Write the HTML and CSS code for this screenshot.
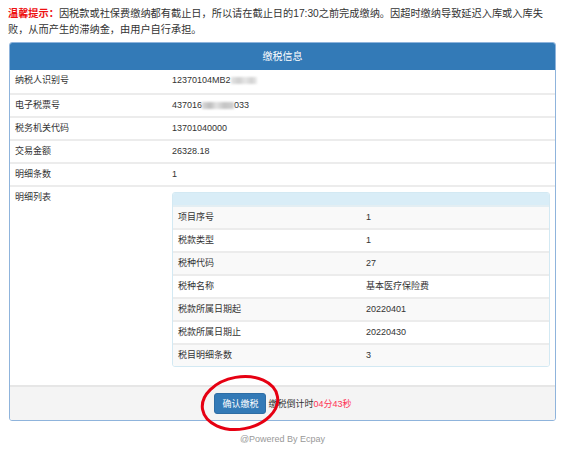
FILE: index.html
```html
<!DOCTYPE html>
<html lang="zh-CN">
<head>
<meta charset="utf-8">
<title>缴税信息</title>
<link rel="stylesheet" href="styles.css">
</head>
<body>
<div class="page">
  <p class="notice"><span class="notice-title">温馨提示：</span>因税款或社保费缴纳都有截止日，所以请在截止日的17:30之前完成缴纳。因超时缴纳导致延迟入库或入库失败，从而产生的滞纳金，由用户自行承担。</p>

  <div class="panel">
    <div class="panel-heading">缴税信息</div>
    <div class="panel-body">
      <div class="row"><div class="label">纳税人识别号</div><div class="value">12370104MB2<span class="blur"></span></div></div>
      <div class="row"><div class="label">电子税票号</div><div class="value">437016<span class="blur blur-long"></span>033</div></div>
      <div class="row"><div class="label">税务机关代码</div><div class="value">13701040000</div></div>
      <div class="row"><div class="label">交易金额</div><div class="value">26328.18</div></div>
      <div class="row"><div class="label">明细条数</div><div class="value">1</div></div>
      <div class="row row-detail">
        <div class="label">明细列表</div>
        <div class="value">
          <div class="subpanel">
            <div class="subpanel-heading"></div>
            <div class="subrow odd"><div class="sublabel">项目序号</div><div class="subvalue">1</div></div>
            <div class="subrow"><div class="sublabel">税款类型</div><div class="subvalue">1</div></div>
            <div class="subrow odd"><div class="sublabel">税种代码</div><div class="subvalue">27</div></div>
            <div class="subrow"><div class="sublabel">税种名称</div><div class="subvalue">基本医疗保险费</div></div>
            <div class="subrow odd"><div class="sublabel">税款所属日期起</div><div class="subvalue">20220401</div></div>
            <div class="subrow"><div class="sublabel">税款所属日期止</div><div class="subvalue">20220430</div></div>
            <div class="subrow odd"><div class="sublabel">税目明细条数</div><div class="subvalue">3</div></div>
          </div>
        </div>
      </div>
    </div>
    <div class="panel-footer">
      <div class="btn-wrap">
        <button class="btn" type="button">确认缴税</button>
        <svg class="circle" width="90" height="64" viewBox="0 0 90 64" aria-hidden="true">
          <ellipse cx="45" cy="32" rx="38" ry="26" transform="rotate(-10 45 32)" fill="none" stroke="#e60012" stroke-width="3"/>
        </svg>
      </div>
      <span class="countdown">缴税倒计时<span class="time">04分43秒</span></span>
    </div>
  </div>

  <div class="powered">@Powered By Ecpay</div>
</div>
</body>
</html>
```

FILE: styles.css
```css
* { box-sizing: border-box; }

html, body {
  margin: 0;
  padding: 0;
  background: #ffffff;
}

body {
  font-family: "Liberation Sans", Arial, "Noto Sans CJK SC", sans-serif;
  color: #333333;
}

.page {
  padding: 6px 11px 0 8px;
}

.notice {
  margin: 0 0 4px 0;
  padding-right: 10px;
  font-size: 10.2px;
  line-height: 16px;
  color: #333333;
}

.notice-title {
  color: #ee1111;
  font-weight: bold;
}

.panel {
  margin-left: 1px;
  border: 1px solid #8fb4dc;
  border-radius: 3px;
}

.panel-heading {
  background: #337ab7;
  color: #ffffff;
  font-size: 10px;
  height: 27px;
  line-height: 27px;
  text-align: center;
  border-radius: 2px 2px 0 0;
}

.panel-body {
  background: #ffffff;
  padding-bottom: 5px;
}

.row {
  display: flex;
  font-size: 9px;
  line-height: 21px;
  height: 23px;
}

.row + .row {
  border-top: 2px solid #ececec;
}

.label {
  width: 157px;
  padding-left: 5px;
  flex-shrink: 0;
}

.value {
  flex: 1;
  padding-left: 5px;
  padding-right: 5px;
}

.blur {
  display: inline-block;
  width: 26px;
  height: 7px;
  vertical-align: middle;
  background: linear-gradient(90deg, #e4e4e4 0%, #cfcfcf 30%, #e6e6e6 55%, #d2d2d2 80%, #ececec 100%);
  filter: blur(1.2px);
}

.blur-long {
  width: 32px;
  background: linear-gradient(90deg, #d8d8d8 0%, #bdbdbd 25%, #e2e2e2 45%, #c4c4c4 70%, #d0d0d0 100%);
}

.row-detail {
  height: auto;
  padding-top: 4px;
}

.row-detail .label {
  line-height: 13px;
}

.subpanel {
  border: 1px solid #d3e9f3;
  border-radius: 3px;
  margin-top: 1px;
  margin-bottom: 13px;
  overflow: hidden;
}

.subpanel-heading {
  background: #d9edf7;
  height: 12px;
}

.subrow {
  display: flex;
  height: 23px;
  line-height: 21px;
  background: #ffffff;
  border-top: 2px solid #ececec;
}

.subrow.odd {
  background: #f9f9f9;
}

.subpanel-heading + .subrow {
  border-top: 2px solid #e3eef3;
}

.sublabel {
  width: 50%;
  padding-left: 5px;
}

.subvalue {
  width: 50%;
  padding-left: 5px;
}

.panel-footer {
  background: #f4f4f4;
  border-top: 2px solid #e6e6e6;
  height: 35px;
  display: flex;
  align-items: center;
  justify-content: center;
  padding-left: 1px;
  font-size: 9px;
  border-radius: 0 0 2px 2px;
}

.btn-wrap {
  position: relative;
  display: flex;
}

.btn {
  width: 52px;
  height: 21px;
  padding: 0;
  margin: 0;
  font-family: inherit;
  font-size: 9px;
  color: #ffffff;
  background: #337ab7;
  border: 1px solid #2e6da4;
  border-radius: 3px;
}

.circle {
  position: absolute;
  left: -19px;
  top: -22px;
  pointer-events: none;
}

.countdown {
  margin-left: 2px;
  color: #333333;
}

.time {
  color: #ff3355;
}

.powered {
  text-align: center;
  font-size: 9px;
  color: #999999;
  margin-top: 13px;
  padding-left: 1px;
}
```
